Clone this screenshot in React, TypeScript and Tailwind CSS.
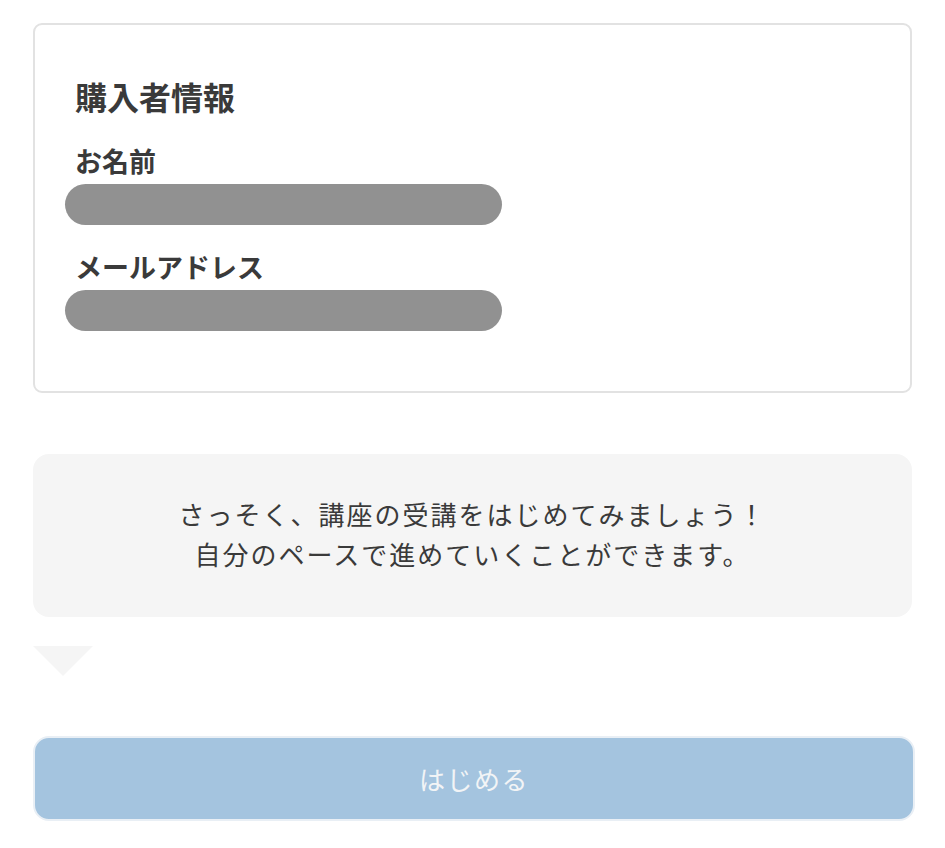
import React from "react";

const font = {
  fontFamily: '"Noto Sans CJK JP", "Noto Sans", sans-serif',
};

const Field: React.FC<{ label: string; className?: string }> = ({ label, className }) => (
  <div className={className}>
    <p className="pl-[10px] text-[27px] font-bold leading-[36px] text-[#3a3a3a]">{label}</p>
    <div className="mt-[5px] h-[41px] w-[437px] rounded-full bg-[#919191]" />
  </div>
);

const App: React.FC = () => {
  return (
    <div className="min-h-screen bg-white" style={font}>
      <div className="flex flex-col px-[33px] pt-[23px]">
        {/* purchaser info */}
        <section className="rounded-[9px] border-2 border-[#e2e2e2] px-[30px] pb-[60px] pt-[51px]">
          <h2 className="pl-[10px] text-[32px] font-bold leading-[40px] text-[#3a3a3a]">購入者情報</h2>
          <Field label="お名前" className="mt-[27px]" />
          <Field label="メールアドレス" className="mt-[24px]" />
        </section>

        {/* message bubble */}
        <div className="mt-[61px] flex h-[163px] flex-col items-center justify-center rounded-[16px] bg-[#f5f5f5] pb-[4px] text-center text-[26px] leading-[40px] tracking-[2px] text-[#3a3a3a]">
          <p>さっそく、講座の受講をはじめてみましょう！</p>
          <p>自分のペースで進めていくことができます。</p>
        </div>
        <div className="mt-[29px] h-0 w-0 border-x-[30px] border-t-[30px] border-x-transparent border-t-[#f5f5f5]" />

        <button
          type="button"
          disabled
          className="mt-[60px] flex h-[85px] w-[882px] items-center justify-center rounded-[16px] border-2 border-[#e9eff5] bg-[#a4c4df] text-[26px] tracking-[1.5px] text-[#f2f4f6]"
        >
          はじめる
        </button>
      </div>
    </div>
  );
};

export default App;
